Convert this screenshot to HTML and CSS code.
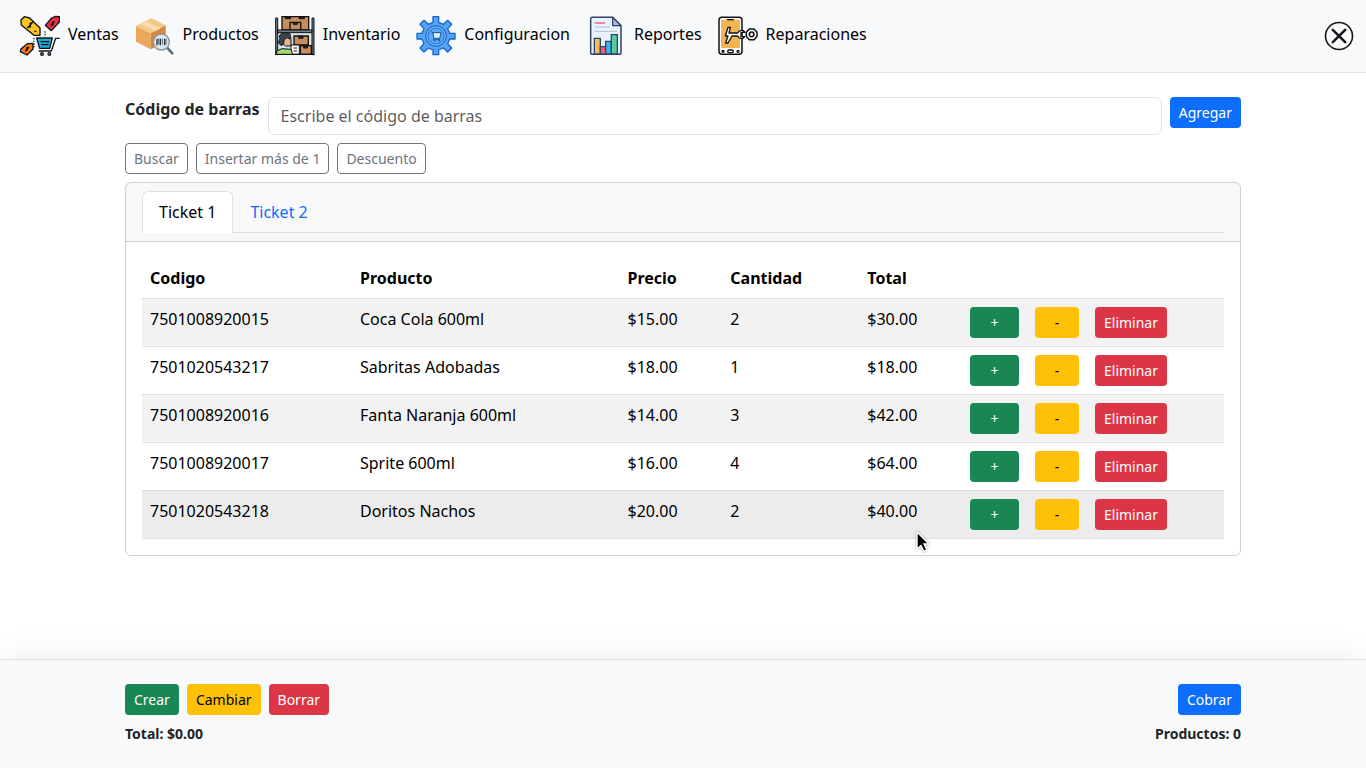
FILE: index.html
```html
<!DOCTYPE html>
<html lang="es">
<head>
<meta charset="utf-8">
<title>Ventas</title>
<link rel="stylesheet" href="styles.css">
</head>
<body>
<header class="topbar">
  <nav class="menu">
    <a class="menu-item"><svg class="icon" viewBox="15 13 120 120">
      <g stroke="#101317" stroke-width="4" stroke-linejoin="round">
        <path fill="#ffc422" d="M18 28 28 18 44 22 75 52V74H57L19 43Z"/>
        <path fill="#ee2c40" d="M122 17 133 18V34L109 60 91 44 110 22Z"/>
        <path fill="#ff7e0a" d="M37 99 54 98V115L36 133 16 123 18 115Z"/>
      </g>
      <g fill="none" stroke="#101317" stroke-width="3.5">
        <path d="M52 39c-4-5-9-1-6 4s0 9-6 5M37 52l17-18M58 62h6"/>
        <path d="M118 36c-5-4-8 0-5 3s0 7-5 3M107 45l12-13M41 112c-5-4-8 0-5 3s0 7-5 3M30 122l12-13"/>
        <path stroke-dasharray="4 4" d="M57 82v28M90 62v17"/>
      </g>
      <g fill="none" stroke="#101317" stroke-width="4" stroke-linejoin="round">
        <path fill="#1ca9d6" d="M65 82h47l-8 31H74Z"/>
        <path d="M134 83h-12l-13 38H71M77 93h25M79 102h22"/>
        <circle cx="81" cy="130" r="4" fill="#aaa"/><circle cx="103" cy="130" r="4" fill="#aaa"/>
      </g></svg><span>Ventas</span></a>
    <a class="menu-item"><svg class="icon" viewBox="15 13 120 120">
      <path fill="#f7c785" d="M18 46 64 22 107 44 62 68Z"/><path fill="#eba75b" d="M18 46 62 68V116L18 93Z"/><path fill="#d68a40" d="M62 68 107 44V93L62 116Z"/>
      <path fill="#fadcb0" d="m31 39 15-8 45 22-14 8Z"/>
      <path stroke="#5b7381" stroke-width="8" stroke-linecap="round" d="m112 112 15 16"/>
      <circle cx="94" cy="94" r="24" fill="#dfe7ea" stroke="#8496a0" stroke-width="4"/>
      <path stroke="#243541" stroke-width="4" d="M81 84v20M91 84v20M104 84v20"/><path stroke="#52616a" stroke-width="3" d="M86 84v17M97 84v17M108 84v17"/></svg><span>Productos</span></a>
    <a class="menu-item"><svg class="icon" viewBox="15 13 120 120">
      <path fill="#d9e4e9" d="M20 67h107v65H20z"/>
      <g stroke="#101214" stroke-width="4">
        <path fill="#c78d5c" d="M36 18h80v40H36zM72 76h43v27H72zM91 105h33v26H91z"/>
        <path fill="#c78d5c" d="M60 35h32v23H60z"/><path fill="#333" stroke-width="3" d="M46 19h16v5H46zM87 19h16v5H87zM70 36h12v5H70zM86 77h13v6H86zM101 106h11v6h-11z"/>
        <path fill="#73808b" stroke-width="3" d="M17 22h6v110h-6zM126 22h6v110h-6zM23 58h103v8H23z"/>
        <path fill="#fff" stroke-width="3" d="M63 103h25v28H63z"/><path stroke-width="3" d="M71 112h10M71 121h10"/><path d="M16 131h117"/>
        <path fill="#e8b28b" stroke-width="3" d="M39 86c0-12 21-15 24-2v22H47l-8-6Z"/>
        <path fill="#3b444e" stroke-width="3" d="M35 105c-14-7-8-15-5-21-8-13 13-22 22-17 8-2 13 9 8 18-13-5-8-5-18 3l-1 10Z"/>
        <path fill="#a2d873" stroke-width="3" d="M20 131v-10l16-7 27 2 5 15Z"/>
      </g></svg><span>Inventario</span></a>
    <a class="menu-item"><svg class="icon" viewBox="12 13 120 120">
      <path fill="#55a2fb" stroke="#1267c7" stroke-width="4" stroke-linejoin="round" d="M63 18h17v17l14 6 13-12 12 12-12 13 6 14h16v17h-16l-6 14 12 13-12 12-13-12-14 6v14H63v-14l-14-6-13 12-12-12 12-13-6-14H15V68h15l6-14-12-13 12-12 13 12 14-6Z"/>
      <circle cx="72" cy="76" r="31" fill="#4796f5" stroke="#1465bb" stroke-width="3"/><circle cx="72" cy="76" r="27" fill="none" stroke="#a5caef" stroke-width="2"/><circle cx="72" cy="76" r="24" fill="#5ba5fb" stroke="#1465bb" stroke-width="2"/>
      <path fill="#e7f4ff" stroke="#0f559f" stroke-width="3" d="M56 64h6l4 19h17l4-17H62M66 83l-2 4h21"/><path fill="#0f559f" d="M65 88h4v4h-4zM80 88h4v4h-4z"/></svg><span>Configuracion</span></a>
    <a class="menu-item"><svg class="icon" viewBox="12 13 120 120">
      <path fill="#e6f2ff" stroke="#33436a" stroke-width="4.5" stroke-linejoin="round" d="M31 20h61l25 25v81q0 5-6 5H32q-6 0-6-5V25q0-5 5-5Z"/>
      <path fill="#a7bdd8" stroke="#33436a" stroke-width="4" stroke-linejoin="round" d="M92 20v25h25Z"/>
      <path fill="none" stroke="#ff536e" stroke-width="4" d="M38 37h31"/><path fill="none" stroke="#aebdd0" stroke-width="3" d="M38 49h46M38 62h67"/>
      <g stroke="#33436a" stroke-width="4"><path fill="#f4bd55" d="M37 83h18v47H37z"/><path fill="#ff5778" d="M55 108h16v22H55z"/><path fill="#32b9f0" d="M71 92h17v38H71z"/><path fill="#50cf96" d="M88 72h18v58H88z"/></g></svg><span>Reportes</span></a>
    <a class="menu-item"><svg class="icon" viewBox="15 13 120 120">
      <rect x="18" y="20" width="69" height="111" rx="9" fill="#fff" stroke="#101214" stroke-width="4.5"/>
      <path fill="#f1b552" d="M24 27h57v85H24z"/><path fill="none" stroke="#101214" stroke-width="4" d="M42 27h21"/>
      <rect x="44" y="118" width="17" height="8" rx="4" fill="#fff" stroke="#101214" stroke-width="4"/><circle cx="30" cy="122" r="3" fill="#fff" stroke="#101214" stroke-width="4"/><circle cx="75" cy="122" r="3" fill="#fff" stroke="#101214" stroke-width="4"/>
      <path fill="#fff" stroke="#101214" stroke-width="4" stroke-linejoin="round" d="m45 50-8 26h8l-7 21h7l12-21h17c5 10 16 10 21 2H84V65h12c-6-9-18-8-22 2H48l4-17Z"/>
      <path fill="#fff" stroke="#101214" stroke-width="4.5" stroke-linejoin="round" d="m109 55 14 0 9 10v12l-9 10h-14l-9-10V65Z"/><circle cx="116" cy="71" r="7" fill="#eee" stroke="#101214" stroke-width="4.5"/></svg><span>Reparaciones</span></a>
  </nav>
  <a class="close"><svg viewBox="0 0 30 30" width="30" height="30" fill="none" stroke="#15171a"><circle cx="15" cy="15" r="13.5" stroke-width="1.6"/><path d="m8.8 8.8 12.4 12.4M21.2 8.8 8.8 21.2" stroke-width="2.6" stroke-linecap="round"/></svg></a>
</header>
<main class="container">
  <form class="search"><label for="codigo">Código de barras</label><input id="codigo" class="field" placeholder="Escribe el código de barras"><button type="button" class="btn blue">Agregar</button></form>
  <div class="actions"><button class="btn outline">Buscar</button><button class="btn outline">Insertar más de 1</button><button class="btn outline">Descuento</button></div>
  <section class="card">
    <div class="card-head"><div class="tabs"><a class="tab active">Ticket 1</a><a class="tab">Ticket 2</a></div></div>
    <div class="card-body">
      <table class="table">
        <colgroup><col class="c-code"><col class="c-prod"><col class="c-price"><col class="c-qty"><col class="c-total"><col></colgroup>
        <thead><tr><th>Codigo</th><th>Producto</th><th>Precio</th><th>Cantidad</th><th>Total</th><th></th></tr></thead>
        <tbody>
          <tr><td>7501008920015</td><td>Coca Cola 600ml</td><td>$15.00</td><td>2</td><td>$30.00</td><td><div class="ops"><button class="btn green plus">+</button><button class="btn yellow minus">-</button><button class="btn red">Eliminar</button></div></td></tr>
          <tr><td>7501020543217</td><td>Sabritas Adobadas</td><td>$18.00</td><td>1</td><td>$18.00</td><td><div class="ops"><button class="btn green plus">+</button><button class="btn yellow minus">-</button><button class="btn red">Eliminar</button></div></td></tr>
          <tr><td>7501008920016</td><td>Fanta Naranja 600ml</td><td>$14.00</td><td>3</td><td>$42.00</td><td><div class="ops"><button class="btn green plus">+</button><button class="btn yellow minus">-</button><button class="btn red">Eliminar</button></div></td></tr>
          <tr><td>7501008920017</td><td>Sprite 600ml</td><td>$16.00</td><td>4</td><td>$64.00</td><td><div class="ops"><button class="btn green plus">+</button><button class="btn yellow minus">-</button><button class="btn red">Eliminar</button></div></td></tr>
          <tr class="hovered"><td>7501020543218</td><td>Doritos Nachos</td><td>$20.00</td><td>2</td><td>$40.00</td><td><div class="ops"><button class="btn green plus">+</button><button class="btn yellow minus">-</button><button class="btn red">Eliminar</button></div></td></tr>
        </tbody>
      </table>
    </div>
  </section>
</main>
<footer class="bottom"><div class="container">
  <div class="row"><div class="group"><button class="btn green">Crear</button><button class="btn yellow">Cambiar</button><button class="btn red">Borrar</button></div><button class="btn blue">Cobrar</button></div>
  <div class="row sums"><span>Total: $0.00</span><span>Productos: 0</span></div>
</div></footer>
<svg class="cursor" viewBox="0 0 14 22" width="14" height="22"><path d="M1 1v17l4-3.5 3 6 3-1.5-3-6h5Z" fill="#000" stroke="#fff" stroke-width="1.4"/></svg>
</body>
</html>
```
FILE: styles.css
```css
* { box-sizing: border-box; }
body { margin: 0; height: 768px; display: flex; flex-direction: column; overflow: hidden; background: #fff; color: #212529; font: 16px/24px "Noto Sans", sans-serif; }
.topbar { height: 73px; flex: none; display: flex; align-items: center; justify-content: space-between; padding: 0 12px 0 20px; background: #f8f9fa; border-bottom: 1px solid #dee2e6; }
.menu { display: flex; gap: 16px; margin-bottom: 2px; }
.menu-item { display: flex; align-items: center; gap: 8px; color: #000; }
.menu-item span { padding-bottom: 3px; }
.icon { display: block; width: 40px; height: 40px; overflow: visible; }
.close { display: flex; }
.container { width: 1140px; margin: 0 auto; padding: 0 12px; }
main.container { flex: 1; padding-top: 24px; }
.search { display: flex; align-items: flex-start; gap: 8px; }
.search label { font-weight: 700; }
.field { flex: 1; height: 38px; padding: 6px 12px; border: 1px solid #dee2e6; border-radius: 6px; font: inherit; background: #fff; }
.field::placeholder { color: rgba(33, 37, 41, .75); opacity: 1; }
.btn { height: 31px; padding: 4px 8px; border: 1px solid transparent; border-radius: 4px; font: 14px/21px "Noto Sans", sans-serif; color: #fff; white-space: nowrap; }
.blue { background: #0d6efd; }
.green { background: #198754; }
.yellow { background: #ffc107; color: #000; }
.red { background: #dc3545; }
.outline { background: transparent; border-color: #6c757d; color: #6c757d; }
.actions { display: flex; gap: 8px; margin: 8px 0; }
.card { border: 1px solid rgba(0, 0, 0, .175); border-radius: 6px; }
.card-head { padding: 8px 16px; background: rgba(33, 37, 41, .03); border-bottom: 1px solid rgba(0, 0, 0, .175); }
.tabs { display: flex; height: 42px; border-bottom: 1px solid #dee2e6; }
.tab { height: 42px; padding: 8px 16px; border: 1px solid transparent; border-radius: 6px 6px 0 0; color: #0d6efd; }
.tab.active { color: #000; background: #fff; border-color: #dee2e6 #dee2e6 #fff; }
.card-body { padding: 16px; }
.table { width: 100%; table-layout: fixed; border-collapse: separate; border-spacing: 0; color: #000; }
.c-code { width: 210px; }
.c-prod { width: 267.5px; }
.c-price { width: 102.8px; }
.c-qty { width: 137px; }
.c-total { width: 102.7px; }
.table th, .table td { padding: 8px; text-align: left; vertical-align: top; border-bottom: 1px solid #dee2e6; }
.table tbody tr:nth-child(odd) td { background: #f2f2f2; }
.table tbody .hovered:nth-child(odd) td { background: #ececec; }
.ops { display: flex; gap: 16px; }
.plus { width: 49px; }
.minus { width: 44px; }
.bottom { flex: none; height: 109px; padding-top: 24px; background: #f8f9fa; border-top: 1px solid #dee2e6; box-shadow: 0 16px 48px rgba(0, 0, 0, .175); }
.row { display: flex; justify-content: space-between; }
.group { display: flex; gap: 8px; }
.sums { margin-top: 8px; font-size: 14px; line-height: 21px; font-weight: 700; }
.cursor { position: absolute; left: 916px; top: 531px; filter: drop-shadow(0 0 1px rgba(0, 0, 0, .4)); }
```
